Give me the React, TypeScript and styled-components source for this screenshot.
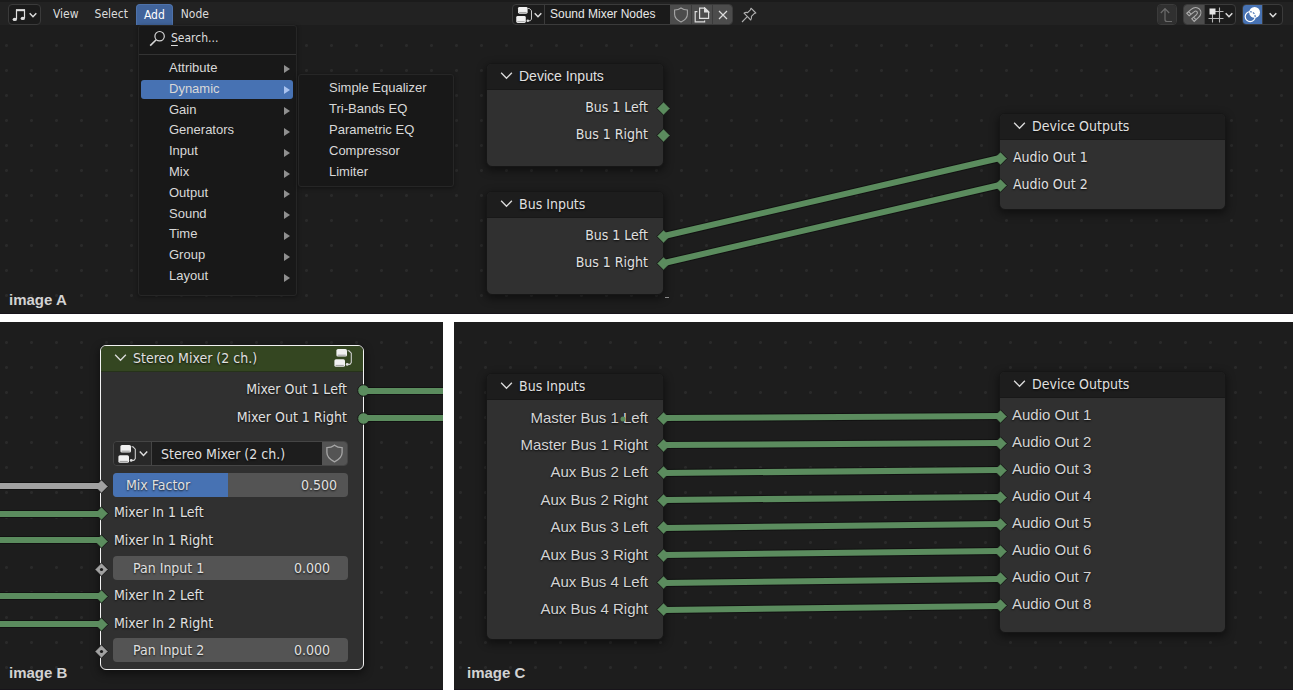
import React from "react";
import styled, { createGlobalStyle, css } from "styled-components";

const GREEN = "#5b8c5e";
const GRAY = "#a1a1a1";
const BLUE = "#4772b3";
const dejavu = `"DejaVu Sans Condensed", "DejaVu Sans", sans-serif`;
const arial = `"Liberation Sans", Arial, sans-serif`;

const Global = createGlobalStyle`
  * { box-sizing: border-box; }
  body { margin: 0; background: #fff; color: #dedede; font-family: ${dejavu}; }
  button, input { font: inherit; color: inherit; margin: 0; padding: 0; border: 0; background: none; border-radius: 0; }
`;

const Page = styled.main`
  min-height: 100vh;
  display: grid;
  grid-template-rows: 314fr 368fr;
  gap: 8px;
`;

const BottomRow = styled.div`
  display: grid;
  grid-template-columns: 443fr 839fr;
  gap: 11px;
`;

const Panel = styled.section`
  position: relative;
  overflow: hidden;
  display: flex;
  flex-direction: column;
  justify-content: space-between;
  background-color: #1d1d1d;
  background-image: radial-gradient(circle at 50% 50%, #2a2a2a 1px, transparent 2px);
  background-size: 25px 25px;
  background-position: -6px 8px;
  border-bottom: 1px solid #17141a;
`;

const Caption = styled.h2`
  margin: auto 0 0;
  padding: 0 9px 4px;
  font: bold 15px/18px ${arial};
  color: #d2d2d2;
`;

const LowCaption = styled(Caption)<{ $inset?: number }>`
  padding: 0 ${(p) => p.$inset ?? 9}px 7px;
`;

/* ---------- header bar ---------- */

const HeaderBar = styled.header`
  display: grid;
  grid-template-columns: 1fr auto 1fr;
  align-items: end;
  height: 25px;
  padding: 0 10px 0 8px;
  background: #222;
  border-top: 2px solid #1b1b1b;
  font: 12px/20px ${dejavu};
`;

const MenuBar = styled.nav`
  display: flex;
  align-items: flex-end;
`;

const ModeButton = styled.button`
  display: flex;
  align-items: center;
  justify-content: center;
  gap: 3px;
  width: 33px;
  height: 21px;
  margin-right: 4px;
  background: #1b1b1b;
  border: 1px solid #3a3a3a;
  border-radius: 4px;
`;

const MenuTitle = styled.button<{ $open?: boolean }>`
  height: 21px;
  padding: 0 8px 1px;
  font: 12px/20px ${dejavu};
  color: #dcdcdc;
  ${(p) =>
    p.$open &&
    css`
      background: #41649b;
      border: 1px solid #4e72aa;
      border-bottom: 0;
      border-radius: 4px 4px 0 0;
      padding: 0 7px;
      color: #fff;
    `}
`;

const DataBlock = styled.div`
  display: flex;
  align-items: center;
  gap: 8px;
  margin-right: 22px;
`;

const Group = styled.div`
  display: flex;
  height: 21px;
  border: 1px solid #3b3b3b;
  border-radius: 4px;
  overflow: hidden;
  background: #1c1c1c;
`;

const GroupButton = styled.button<{ $w: number; $tone?: "raised" | "active" | "dim" }>`
  display: flex;
  align-items: center;
  justify-content: center;
  gap: 1px;
  width: ${(p) => p.$w}px;
  color: #dcdcdc;
  background: ${(p) =>
    p.$tone === "raised" ? "#4c4c4c" : p.$tone === "active" ? BLUE : p.$tone === "dim" ? "#303030" : "transparent"};
  & + & {
    border-left: 1px solid #3b3b3b;
  }
`;

const NameInput = styled.input`
  width: 126px;
  padding: 0 5px;
  font: 12px/19px ${arial};
  color: #e8e8e8;
  background: #1a1a1a;
  border-left: 1px solid #3b3b3b;
`;

const Plain = styled.button`
  display: flex;
`;

const Tools = styled.div`
  display: flex;
  justify-content: flex-end;
  gap: 6px;
`;

/* ---------- drop-down menus ---------- */

const menuBox = css`
  position: absolute;
  z-index: 5;
  background: #181818;
  border: 1px solid #262626;
  border-radius: 3px;
  box-shadow: 0 1px 4px rgba(0, 0, 0, 0.4);
`;

const Menu = styled.div`
  ${menuBox}
  left: 138px;
  top: 25px;
  width: 159px;
`;

const SubMenu = styled.div`
  ${menuBox}
  left: 298px;
  top: 74px;
  width: 156px;
  padding: 3px 2px;
`;

const SearchRow = styled.button`
  display: flex;
  align-items: center;
  gap: 5px;
  width: 100%;
  height: 29px;
  padding: 0 10px 4px;
  font: 12px/20px ${dejavu};
  border-bottom: 1px solid #333;
  u {
    text-underline-offset: 3px;
  }
`;

const MenuList = styled.ul<{ $h: number }>`
  list-style: none;
  margin: 0;
  padding: 0;
  display: flex;
  flex-direction: column;
  height: ${(p) => p.$h}px;
`;

const AddList = styled(MenuList)`
  margin: 3px 3px 8px 2px;
`;

const MenuCell = styled.li`
  flex: 1;
  display: flex;
`;

const Arrow = styled.i`
  width: 0;
  height: 0;
  margin-top: 3px;
  border: 4px solid transparent;
  border-left: 6px solid #8f8f8f;
  border-right: 0;
`;

const MenuItem = styled.button<{ $on?: boolean }>`
  flex: 1;
  display: flex;
  align-items: center;
  justify-content: space-between;
  padding: 0 3px 1px 28px;
  font: 13px/18px ${arial};
  color: #d8d8d8;
  border-radius: 3px;
  background: ${(p) => (p.$on ? BLUE : "transparent")};
  margin: ${(p) => (p.$on ? "1px 0" : "0")};
  ${Arrow} {
    border-left-color: ${(p) => (p.$on ? "#a9c3f0" : "#8f8f8f")};
  }
`;

/* ---------- nodes ---------- */

const NodeCard = styled.article<{ $x: number; $y: number; $w: number; $h: number; $selected?: boolean }>`
  position: absolute;
  left: ${(p) => p.$x}px;
  top: ${(p) => p.$y}px;
  width: ${(p) => p.$w}px;
  height: ${(p) => p.$h}px;
  display: flex;
  flex-direction: column;
  background: #303030;
  border-radius: 6px;
  border: 1px solid ${(p) => (p.$selected ? "#f2f2f2" : "#161616")};
  box-shadow: 0 3px 8px 1px rgba(0, 0, 0, 0.45);
  font: 14px/18px ${dejavu};
  text-shadow: 0 1px 2px rgba(0, 0, 0, 0.8);
  color: #e0e0e0;
`;

const NodeHead = styled.h3<{ $green?: boolean; $arial?: boolean }>`
  flex: none;
  display: flex;
  align-items: center;
  gap: 6px;
  height: 26px;
  margin: 0;
  padding: 0 10px 2px 13px;
  border-radius: 5px 5px 0 0;
  background: ${(p) => (p.$green ? "#344621" : "#1d1d1d")};
  border-bottom: 1px solid ${(p) => (p.$green ? "#26321a" : "#181818")};
  font: 14px/22px ${(p) => (p.$arial ? arial : dejavu)};
  span {
    flex: 1;
  }
`;

const Rows = styled.ul<{ $pad: number; $arial?: boolean }>`
  flex: 1;
  display: flex;
  flex-direction: column;
  list-style: none;
  margin: 0;
  padding: 4px 0 ${(p) => p.$pad}px;
  ${(p) =>
    p.$arial &&
    css`
      font: 15px/18px ${arial};
      color: #d4d4d4;
    `}
`;

const Row = styled.li<{ $right?: boolean; $inset?: number; $level?: boolean }>`
  position: relative;
  flex: 1;
  display: flex;
  align-items: center;
  justify-content: ${(p) => (p.$right ? "flex-end" : "flex-start")};
  padding: 0 ${(p) => p.$inset ?? 12}px ${(p) => (p.$level ? 0 : 2)}px;
`;

const SocketMark = styled.svg<{ $right?: boolean }>`
  position: absolute;
  top: 50%;
  ${(p) => (p.$right ? "right: -8px" : "left: -7px")};
  width: 15px;
  height: 15px;
  margin-top: -7px;
`;

const OutRows = styled.ul`
  flex: none;
  display: grid;
  grid-auto-rows: 28px;
  list-style: none;
  margin: 0 0 9px;
  padding: 4px 0 0;
`;

const InRows = styled(Rows)`
  padding-top: 6px;
`;

const Picker = styled.div`
  flex: none;
  display: flex;
  height: 25px;
  margin: 0 15px 0 12px;
  border: 1px solid #454545;
  border-radius: 4px;
  overflow: hidden;
`;

const PickerButton = styled.button<{ $raised?: boolean }>`
  display: flex;
  flex: none;
  align-items: center;
  justify-content: center;
  gap: 2px;
  width: ${(p) => (p.$raised ? 25 : 37)}px;
  background: ${(p) => (p.$raised ? "#545454" : "#282828")};
`;

const PickerInput = styled.input`
  flex: 1;
  min-width: 0;
  padding: 0 9px;
  background: #1d1d1d;
  border-left: 1px solid #454545;
  text-shadow: inherit;
`;

const FieldRow = styled(Row)`
  padding: 0 15px 2px 12px;
`;

const Field = styled.label`
  flex: 1;
  min-width: 0;
  display: flex;
  align-items: center;
  height: 24px;
  padding: 0 18px 0 20px;
  background: #545454;
  border-radius: 4px;
  input {
    flex: 1;
    width: 0;
    min-width: 0;
    text-align: right;
    text-shadow: inherit;
  }
`;

const SliderField = styled.label`
  flex: 1;
  display: grid;
  grid-template-columns: 1fr auto;
  align-items: center;
  height: 24px;
  background: #545454;
  border-radius: 4px;
  overflow: hidden;
  span,
  output {
    grid-row: 1;
    z-index: 1;
    pointer-events: none;
  }
  span {
    grid-column: 1;
    padding-left: 13px;
  }
  output {
    grid-column: 2;
    padding-right: 11px;
  }
  input {
    grid-area: 1 / 1 / 2 / 3;
    appearance: none;
    width: 100%;
    height: 24px;
    background: linear-gradient(90deg, ${BLUE} 49%, transparent 49%);
  }
  input::-webkit-slider-thumb {
    appearance: none;
    width: 1px;
    height: 24px;
  }
`;

const WireLayer = styled.svg`
  position: absolute;
  inset: 0;
  width: 100%;
  height: 100%;
  pointer-events: none;
`;

/* ---------- icons ---------- */

const Chevron = ({ w = 8, sw = 1.5 }: { w?: number; sw?: number }) => (
  <svg width={w} height={w} viewBox="0 0 8 8" fill="none" stroke="#dcdcdc" strokeWidth={(sw * 8) / w}>
    <path d="M0.7 2.3 4 5.7 7.3 2.3" />
  </svg>
);

const NodeTreeIcon = ({ size = 20 }: { size?: number }) => (
  <svg width={size} height={size} viewBox="0 0 20 20">
    <g fill="#f0f0f0">
      <rect x="3.4" y="1" width="10.6" height="7.6" rx="1.6" />
      <rect x="1.4" y="11.2" width="10.6" height="7.6" rx="1.6" />
    </g>
    <path d="M4.6 7.2h8.2M2.6 17.4h8.2" stroke="#777" strokeWidth="0.7" />
    <path d="M14.6 2.8H16l2.3 2.4v9.4l-1.4 1.8h-2.6" fill="none" stroke="#cfcfcf" strokeWidth="1.1" />
    <circle cx="14.2" cy="16.4" r="1.4" fill="#ddd" />
  </svg>
);

const MusicIcon = () => (
  <svg width="14" height="14" viewBox="0 0 14 14">
    <path d="M4.5 11V2h8v8" fill="none" stroke="#ddd" strokeWidth="1.2" />
    <path d="M4 1.2h9v2H4z" fill="#ddd" />
    <ellipse cx="2.8" cy="11.4" rx="2.2" ry="1.7" fill="#ddd" />
    <ellipse cx="10.8" cy="10.4" rx="2.2" ry="1.7" fill="#ddd" />
  </svg>
);

const SearchIcon = () => (
  <svg width="17" height="17" viewBox="0 0 17 17" fill="none" stroke="#d6d6d6" strokeWidth="1.2">
    <circle cx="10.6" cy="6.2" r="4.7" />
    <path d="M7.2 9.7 1.2 15.6" strokeWidth="1.6" />
  </svg>
);

const ShieldIcon = ({ size = 16 }: { size?: number }) => (
  <svg width={size} height={size} viewBox="0 0 16 16" fill="none" stroke="#a6a6a6" strokeWidth="1.1">
    <path d="M8 1C6.2 2.4 4 3 1.6 3v4.2c0 3.4 2.4 5.9 6.4 7.8 4-1.9 6.4-4.4 6.4-7.8V3C12 3 9.8 2.4 8 1z" />
  </svg>
);

const CopyIcon = () => (
  <svg width="16" height="16" viewBox="0 0 16 16" fill="none" stroke="#dcdcdc" strokeWidth="1.2">
    <path d="M5.6 1.2h5.2l3.8 3.6v6.6h-9z" />
    <path d="M10.6 1v4h4z" fill="#dcdcdc" />
    <path d="M3.4 4.6H1.2v10.2h9.4v-1.4" />
  </svg>
);

const CloseIcon = () => (
  <svg width="10" height="10" viewBox="0 0 10 10" stroke="#dcdcdc" strokeWidth="1.2">
    <path d="M1 1l8 8M9 1 1 9" />
  </svg>
);

const PinIcon = () => (
  <svg width="16" height="16" viewBox="0 0 16 16" fill="none" stroke="#b0b0b0" strokeWidth="1.1" strokeLinejoin="round">
    <path d="M10 1.2 14.8 6l-1.6.6-2.8 2.8c.4 1.5.2 2.6-.6 3.6L3 6.2c1-.8 2.2-1 3.6-.6l2.8-2.8z" />
    <path d="M6 9.8 1 15" />
  </svg>
);

const UpArrowIcon = () => (
  <svg width="16" height="16" viewBox="0 0 16 16" fill="none" stroke="#6c6c6c" strokeWidth="1.2">
    <path d="M1.8 6 6 1.6 10.2 6M6 2v10.5c0 1.2.8 2 2 2h5" />
  </svg>
);

const MagnetIcon = () => (
  <svg width="18" height="18" viewBox="0 0 18 18" fill="none" stroke="#adadad" strokeWidth="1.1">
    <path d="M1.8 7.2 6.2 3.4c2.8-2.4 6.2-2.4 8.3-.2 2.1 2.3 1.7 5.6-.7 7.9l-4.6 4.3-2.4-2.5 4.7-4.3c1.2-1.2 1.3-2.1.5-3-.8-.8-1.8-.8-3 .3L4.2 9.8zM3.6 5.7l2.4 2.5M8.6 11.2l2.4 2.5" />
  </svg>
);

const SnapIcon = () => (
  <svg width="16" height="16" viewBox="0 0 16 16" stroke="#b5b5b5" strokeWidth="1.1">
    <path d="M4.5 3v12.5M11.5.5v15M.5 11.5h15M7 4.5h8.5" />
    <rect x="1.5" y="1.5" width="6" height="6" fill="#e6e6e6" stroke="none" />
  </svg>
);

const OverlayIcon = () => (
  <svg width="17" height="17" viewBox="0 0 17 17">
    <circle cx="6.2" cy="10.6" r="5" fill="none" stroke="#fff" strokeWidth="1.2" />
    <circle cx="10.6" cy="6.4" r="5.4" fill="#fff" />
    <path d="M6 5.7a5 5 0 0 1 5.1 5.7" fill="none" stroke={BLUE} strokeWidth="1.1" strokeDasharray="2 1" />
  </svg>
);

/* ---------- node parts ---------- */

type Shape = "diamond" | "circle" | "dot";

const Socket = ({ right, shape = "diamond", color = GREEN }: { right?: boolean; shape?: Shape; color?: string }) => (
  <SocketMark $right={right} viewBox="0 0 15 15">
    {shape === "circle" ? (
      <circle cx="7.5" cy="7.5" r="5.8" fill={color} stroke="#151515" />
    ) : (
      <path d="M7.5 0.8 14.2 7.5 7.5 14.2 0.8 7.5z" fill={color} stroke="#151515" />
    )}
    {shape === "dot" && <circle cx="7.5" cy="7.5" r="1.6" fill="#1a1a1a" />}
  </SocketMark>
);

type NodeProps = {
  title: string;
  x: number;
  y: number;
  w: number;
  h: number;
  pad: number;
  rows: string[];
  right?: boolean;
  inset?: number;
  arialHead?: boolean;
  arialRows?: boolean;
};

const SimpleNode = ({ title, x, y, w, h, pad, rows, right, inset, arialHead, arialRows }: NodeProps) => (
  <NodeCard $x={x} $y={y} $w={w} $h={h}>
    <NodeHead $arial={arialHead}>
      <Chevron w={13} sw={1.3} />
      <span>{title}</span>
    </NodeHead>
    <Rows $pad={pad} $arial={arialRows}>
      {rows.map((r) => (
        <Row key={r} $right={right} $level={right && arialRows} $inset={inset ?? (right ? 15 : 12)}>
          {r}
          <Socket right={right} />
        </Row>
      ))}
    </Rows>
  </NodeCard>
);

/* A wire is [x1, y1, x2, y2, colour?]. Its dark edge lies below the nodes, its core above them. */
type WireData = [number, number, number | string, number, string?];

const Wires = ({ list, edge, children }: { list: WireData[]; edge?: boolean; children?: React.ReactNode }) => (
  <WireLayer>
    {list.map(([x1, y1, x2, y2, color = GREEN]) => (
      <line
        key={`${x1}-${y1}`}
        x1={x1}
        y1={y1}
        x2={x2}
        y2={y2}
        stroke={edge ? "#121212" : color}
        strokeWidth={edge ? 8 : 6}
      />
    ))}
    {children}
  </WireLayer>
);

const addItems = ["Attribute", "Dynamic", "Gain", "Generators", "Input", "Mix", "Output", "Sound", "Time", "Group", "Layout"];
const dynamicItems = ["Simple Equalizer", "Tri-Bands EQ", "Parametric EQ", "Compressor", "Limiter"];
const busRows = [2, 3, 4].flatMap((n) => [`Aux Bus ${n} Left`, `Aux Bus ${n} Right`]);

const wiresA: WireData[] = [
  [664, 236, 1000, 158],
  [664, 263, 1000, 185],
];
const wiresB: WireData[] = [
  [363, 69, "100%", 69],
  [363, 96, "100%", 96],
  [0, 164, 101, 164, GRAY],
  [0, 192, 101, 192],
  [0, 218, 101, 218],
  [0, 274, 101, 274],
  [0, 302, 101, 302],
];
const deviceInY = [94, 121, 148, 175, 202, 229, 257, 284];
const wiresC: WireData[] = [96, 123, 151, 178, 206, 233, 261, 288].map((y, i) => [210, y, 546, deviceInY[i]]);

const PanInput = ({ n }: { n: number }) => (
  <FieldRow>
    <Socket shape="dot" color={GRAY} />
    <Field>
      {`Pan Input ${n}`}
      <input defaultValue="0.000" />
    </Field>
  </FieldRow>
);

const MixerInput = ({ name }: { name: string }) => (
  <Row $inset={13}>
    <Socket />
    {name}
  </Row>
);

export default function App() {
  return (
    <>
      <Global />
      <Page>
        <Panel>
          <HeaderBar>
            <MenuBar>
              <ModeButton aria-label="Editor type">
                <MusicIcon />
                <Chevron />
              </ModeButton>
              <MenuTitle>View</MenuTitle>
              <MenuTitle>Select</MenuTitle>
              <MenuTitle $open>Add</MenuTitle>
              <MenuTitle>Node</MenuTitle>
            </MenuBar>
            <DataBlock>
              <Group>
                <GroupButton $w={31} aria-label="Browse node trees">
                  <NodeTreeIcon size={18} />
                  <Chevron />
                </GroupButton>
                <NameInput aria-label="Node tree name" defaultValue="Sound Mixer Nodes" />
                <GroupButton $w={21} $tone="raised" aria-label="Fake user">
                  <ShieldIcon />
                </GroupButton>
                <GroupButton $w={21} $tone="raised" aria-label="Duplicate">
                  <CopyIcon />
                </GroupButton>
                <GroupButton $w={20} $tone="raised" aria-label="Unlink">
                  <CloseIcon />
                </GroupButton>
              </Group>
              <Plain aria-label="Pin">
                <PinIcon />
              </Plain>
            </DataBlock>
            <Tools>
              <Group>
                <GroupButton $w={18} $tone="dim" aria-label="Parent tree">
                  <UpArrowIcon />
                </GroupButton>
              </Group>
              <Group>
                <GroupButton $w={20} $tone="raised" aria-label="Snap">
                  <MagnetIcon />
                </GroupButton>
                <GroupButton $w={31} aria-label="Snap options">
                  <SnapIcon />
                  <Chevron />
                </GroupButton>
              </Group>
              <Group>
                <GroupButton $w={19} $tone="active" aria-label="Overlays">
                  <OverlayIcon />
                </GroupButton>
                <GroupButton $w={20} aria-label="Overlay options">
                  <Chevron />
                </GroupButton>
              </Group>
            </Tools>
          </HeaderBar>

          <Wires list={wiresA} edge />
          <SimpleNode title="Device Inputs" x={486} y={63} w={178} h={104} pad={17} rows={["Bus 1 Left", "Bus 1 Right"]} right arialHead />
          <SimpleNode title="Bus Inputs" x={486} y={191} w={178} h={104} pad={17} rows={["Bus 1 Left", "Bus 1 Right"]} right />
          <SimpleNode title="Device Outputs" x={999} y={113} w={227} h={97} pad={10} rows={["Audio Out 1", "Audio Out 2"]} inset={13} />
          <Wires list={wiresA}>
            <path d="M665 297.5h4" stroke="#8a8a8a" />
          </Wires>

          <Menu>
            <SearchRow>
              <SearchIcon />
              <span>
                <u>S</u>earch...
              </span>
            </SearchRow>
            <AddList $h={229}>
              {addItems.map((name) => (
                <MenuCell key={name}>
                  <MenuItem $on={name === "Dynamic"}>
                    {name}
                    <Arrow />
                  </MenuItem>
                </MenuCell>
              ))}
            </AddList>
          </Menu>
          <SubMenu>
            <MenuList $h={105}>
              {dynamicItems.map((name) => (
                <MenuCell key={name}>
                  <MenuItem>{name}</MenuItem>
                </MenuCell>
              ))}
            </MenuList>
          </SubMenu>
          <Caption>image A</Caption>
        </Panel>

        <BottomRow>
          <Panel>
            <Wires list={wiresB} edge />
            <NodeCard $x={100} $y={23} $w={264} $h={325} $selected>
              <NodeHead $green>
                <Chevron w={13} sw={1.3} />
                <span>Stereo Mixer (2 ch.)</span>
                <NodeTreeIcon />
              </NodeHead>
              <OutRows>
                <Row $right $inset={16}>
                  Mixer Out 1 Left
                  <Socket right shape="circle" />
                </Row>
                <Row $right $inset={16}>
                  Mixer Out 1 Right
                  <Socket right shape="circle" />
                </Row>
              </OutRows>
              <Picker>
                <PickerButton aria-label="Browse node groups">
                  <NodeTreeIcon />
                  <Chevron w={9} />
                </PickerButton>
                <PickerInput aria-label="Node group name" defaultValue="Stereo Mixer (2 ch.)" />
                <PickerButton $raised aria-label="Fake user">
                  <ShieldIcon size={19} />
                </PickerButton>
              </Picker>
              <InRows $pad={4}>
                <FieldRow>
                  <Socket color={GRAY} />
                  <SliderField>
                    <span>Mix Factor</span>
                    <output>0.500</output>
                    <input type="range" min="0" max="1" step="0.001" defaultValue="0.5" />
                  </SliderField>
                </FieldRow>
                <MixerInput name="Mixer In 1 Left" />
                <MixerInput name="Mixer In 1 Right" />
                <PanInput n={1} />
                <MixerInput name="Mixer In 2 Left" />
                <MixerInput name="Mixer In 2 Right" />
                <PanInput n={2} />
              </InRows>
            </NodeCard>
            <Wires list={wiresB} />
            <LowCaption>image B</LowCaption>
          </Panel>

          <Panel>
            <Wires list={wiresC} edge />
            <SimpleNode
              title="Bus Inputs"
              x={32}
              y={51}
              w={178}
              h={267}
              pad={16}
              rows={["Master Bus 1 Left", "Master Bus 1 Right", ...busRows]}
              right
              arialRows
            />
            <SimpleNode
              title="Device Outputs"
              x={545}
              y={49}
              w={227}
              h={262}
              pad={14}
              rows={[1, 2, 3, 4, 5, 6, 7, 8].map((n) => `Audio Out ${n}`)}
              arialRows
            />
            <Wires list={wiresC}>
              <circle cx="169" cy="97" r="2.5" fill={GREEN} />
            </Wires>
            <LowCaption $inset={13}>image C</LowCaption>
          </Panel>
        </BottomRow>
      </Page>
    </>
  );
}
